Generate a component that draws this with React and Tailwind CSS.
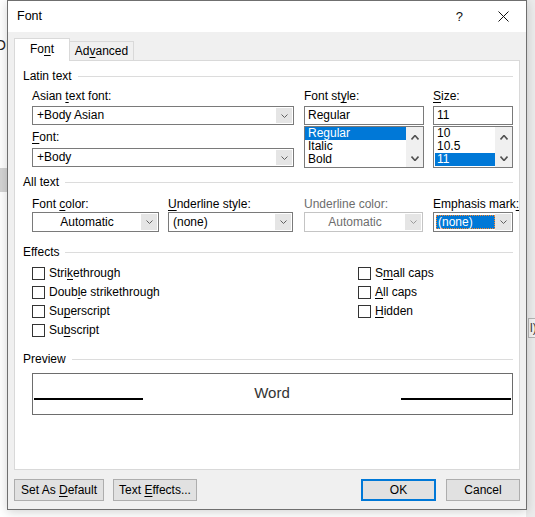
import React from "react";

const Chev = ({ up = false, color = "#606060", w = 7, h = 4, sw = 1 }) => (
  <svg width={w} height={h} viewBox={`0 0 ${w} ${h}`} className="block">
    <polyline
      points={
        up
          ? `0.5,${h - 0.5} ${w / 2},0.5 ${w - 0.5},${h - 0.5}`
          : `0.5,0.5 ${w / 2},${h - 0.5} ${w - 0.5},0.5`
      }
      fill="none"
      stroke={color}
      strokeWidth={sw}
    />
  </svg>
);

const Section = ({ children, className = "" }) => (
  <div className={`flex items-center h-[15px] ${className}`}>
    <span className="whitespace-nowrap">{children}</span>
    <div className="flex-1 h-px bg-[#dcdcdc] ml-[6px]" />
  </div>
);

const Label = ({ children, className = "" }) => (
  <div className={`h-[15px] leading-[15px] whitespace-nowrap ${className}`}>{children}</div>
);

const U = ({ children }) => <span className="underline decoration-1 underline-offset-[2px]">{children}</span>;

const DropBtn = ({ disabled }) => (
  <div className="w-[16px] my-[1px] mr-[1px] bg-[#e5e5e5] flex items-center justify-center">
    <Chev color={disabled ? "#9a9a9a" : "#606060"} />
  </div>
);

const Check = ({ children }) => (
  <div className="flex items-center h-[19px]">
    <div className="w-[13px] h-[13px] border border-[#333333] bg-white" />
    <span className="ml-[4px] leading-[15px] whitespace-nowrap">{children}</span>
  </div>
);

const ScrollBar = () => (
  <div className="w-[17px] bg-[#f0f0f0] flex flex-col items-center justify-between pt-[8px] pb-[6px]">
    <Chev up color="#505050" w={8} h={5} sw={1.6} />
    <Chev color="#505050" w={8} h={5} sw={1.6} />
  </div>
);

const Btn = ({ children, className = "" }) => (
  <div className={`h-[22px] flex items-center justify-center bg-[#e1e1e1] ${className}`}>
    <span className="whitespace-nowrap">{children}</span>
  </div>
);

export default function App() {
  return (
    <div className="w-[535px] h-[517px] bg-white relative overflow-hidden font-['Liberation_Sans',Arial,sans-serif] text-[12px] leading-[15px] text-black">
      {/* background slivers behind the dialog */}
      <div className="absolute left-[-5px] top-[38px] text-[14px] text-[#222]">OI</div>
      <div className="absolute left-0 top-[168px] w-[8px] h-[24px] bg-[#d4d4d4]" />
      <div className="absolute right-0 top-0 w-[9px] h-[517px] bg-[#ececec]" />
      <div className="absolute left-[528px] top-[318px] w-[12px] h-[20px] border border-[#b5b5b5] bg-[#f3f3f3] text-[12px] leading-[18px] text-[#333] pl-[1px]">
        l)
      </div>

      <div className="relative ml-[7px] w-[520px] h-[510px] border border-[#6f6f6f] bg-[#f0f0f0] flex flex-col shadow-[0_2px_10px_rgba(0,0,0,0.18)]">
        {/* title bar */}
        <div className="h-[31px] bg-white flex items-center pl-[9px]">
          <span className="text-[12.5px]">Font</span>
          <div className="flex-1" />
          <span className="text-[13px] text-[#111] mr-[35px]">?</span>
          <svg width="11" height="11" viewBox="0 0 11 11" className="mr-[17px]">
            <line x1="0.5" y1="0.5" x2="10.5" y2="10.5" stroke="#111" strokeWidth="1" />
            <line x1="10.5" y1="0.5" x2="0.5" y2="10.5" stroke="#111" strokeWidth="1" />
          </svg>
        </div>

        {/* body */}
        <div className="flex-1 px-[6px] pt-[6px] pb-[8px] flex flex-col">
          {/* tabs */}
          <div className="h-[22px] flex items-end">
            <div className="relative z-10 w-[56px] h-[23px] -mb-px bg-white border-l border-t border-r border-[#d9d9d9] flex items-center justify-center pb-[1px]">
              <span>
                Fo<U>n</U>t
              </span>
            </div>
            <div className="w-[64px] h-[19px] border-t border-r border-[#d9d9d9] flex items-center justify-center">
              <span>
                Ad<U>v</U>anced
              </span>
            </div>
          </div>

          {/* panel */}
          <div className="h-[410px] bg-white border border-[#d9d9d9] pl-[8px] pr-[6px] pt-[8px]">
            <Section>Latin text</Section>
            <div className="ml-[9px] mt-[5px] flex">
              <div className="w-[262px]">
                <Label>
                  Asian <U>t</U>ext font:
                </Label>
                <div className="mt-[2px] h-[19px] border border-[#7a7a7a] bg-white flex">
                  <div className="flex-1 pl-[4px] flex items-center">+Body Asian</div>
                  <DropBtn />
                </div>
                <Label className="mt-[5px]">
                  <U>F</U>ont:
                </Label>
                <div className="mt-[3px] h-[19px] border border-[#7a7a7a] bg-white flex">
                  <div className="flex-1 pl-[4px] flex items-center">+Body</div>
                  <DropBtn />
                </div>
              </div>

              <div className="w-[120px] ml-[10px]">
                <Label>
                  Font st<U>y</U>le:
                </Label>
                <div className="mt-[2px] h-[19px] border border-[#7a7a7a] bg-white pl-[3px] flex items-center">
                  Regular
                </div>
                <div className="mt-[1px] h-[42px] border border-[#7a7a7a] bg-white flex">
                  <div className="flex-1">
                    <div className="h-[13px] leading-[13px] bg-[#0078d7] text-white pl-[3px]">Regular</div>
                    <div className="h-[13px] leading-[13px] pl-[3px]">Italic</div>
                    <div className="h-[13px] leading-[13px] pl-[3px]">Bold</div>
                  </div>
                  <ScrollBar />
                </div>
              </div>

              <div className="w-[80px] ml-[9px]">
                <Label>
                  <U>S</U>ize:
                </Label>
                <div className="mt-[2px] h-[19px] border border-[#7a7a7a] bg-white pl-[3px] flex items-center">
                  11
                </div>
                <div className="mt-[1px] h-[42px] border border-[#7a7a7a] bg-white flex">
                  <div className="flex-1 pl-[1px]">
                    <div className="h-[13px] leading-[13px] pl-[2px]">10</div>
                    <div className="h-[13px] leading-[13px] pl-[2px]">10.5</div>
                    <div className="h-[13px] leading-[13px] bg-[#0078d7] text-white pl-[2px]">11</div>
                  </div>
                  <ScrollBar />
                </div>
              </div>
            </div>

            <Section className="mt-[7px]">All text</Section>
            <div className="ml-[9px] mt-[7px] flex">
              <div className="w-[127px]">
                <Label>
                  Font <U>c</U>olor:
                </Label>
                <div className="h-[20px] border border-[#7a7a7a] bg-white flex">
                  <div className="flex-1 flex items-center justify-center">Automatic</div>
                  <DropBtn />
                </div>
              </div>
              <div className="w-[125px] ml-[9px]">
                <Label>
                  <U>U</U>nderline style:
                </Label>
                <div className="h-[20px] border border-[#7a7a7a] bg-white flex">
                  <div className="flex-1 pl-[4px] flex items-center">(none)</div>
                  <DropBtn />
                </div>
              </div>
              <div className="w-[119px] ml-[11px]">
                <Label className="text-[#6d6d6d]">Underline color:</Label>
                <div className="h-[20px] border border-[#c4c4c4] bg-white flex">
                  <div className="flex-1 flex items-center justify-center text-[#6d6d6d]">Automatic</div>
                  <DropBtn disabled />
                </div>
              </div>
              <div className="w-[80px] ml-[10px]">
                <Label>
                  Emphasis mark<U>:</U>
                </Label>
                <div className="h-[20px] border border-[#7a7a7a] bg-white flex">
                  <div className="flex-1 p-[2px] pr-0">
                    <div className="h-full bg-[#0078d7] text-white border border-dotted border-[#ff8728] pl-[1px] flex items-center">
                      (none)
                    </div>
                  </div>
                  <DropBtn />
                </div>
              </div>
            </div>

            <Section className="mt-[13px]">Effects</Section>
            <div className="ml-[9px] mt-[4px] flex">
              <div className="w-[326px]">
                <Check>
                  Stri<U>k</U>ethrough
                </Check>
                <Check>
                  Doub<U>l</U>e strikethrough
                </Check>
                <Check>
                  Su<U>p</U>erscript
                </Check>
                <Check>
                  Su<U>b</U>script
                </Check>
              </div>
              <div>
                <Check>
                  S<U>m</U>all caps
                </Check>
                <Check>
                  <U>A</U>ll caps
                </Check>
                <Check>
                  <U>H</U>idden
                </Check>
              </div>
            </div>

            <Section className="mt-[12px]">Preview</Section>
            <div className="ml-[9px] mt-[6px] h-[42px] border border-[#6d6d6d] flex items-start px-[1px]">
              <div className="w-[109px] h-[1.5px] bg-black mt-[24px]" />
              <div className="flex-1 flex justify-center mt-[9px] text-[15px] leading-[20px] text-[#333]">Word</div>
              <div className="w-[110px] h-[1.5px] bg-black mt-[24px]" />
            </div>
          </div>

          {/* buttons */}
          <div className="mt-[9px] flex">
            <Btn className="w-[90px] border border-[#adadad]">
              Set As <U>D</U>efault
            </Btn>
            <Btn className="w-[84px] ml-[9px] border border-[#adadad]">
              Text <U>E</U>ffects...
            </Btn>
            <div className="flex-1" />
            <Btn className="w-[75px] border-2 border-[#0078d7]">OK</Btn>
            <Btn className="w-[74px] ml-[10px] border border-[#adadad]">Cancel</Btn>
          </div>
        </div>
      </div>
    </div>
  );
}
